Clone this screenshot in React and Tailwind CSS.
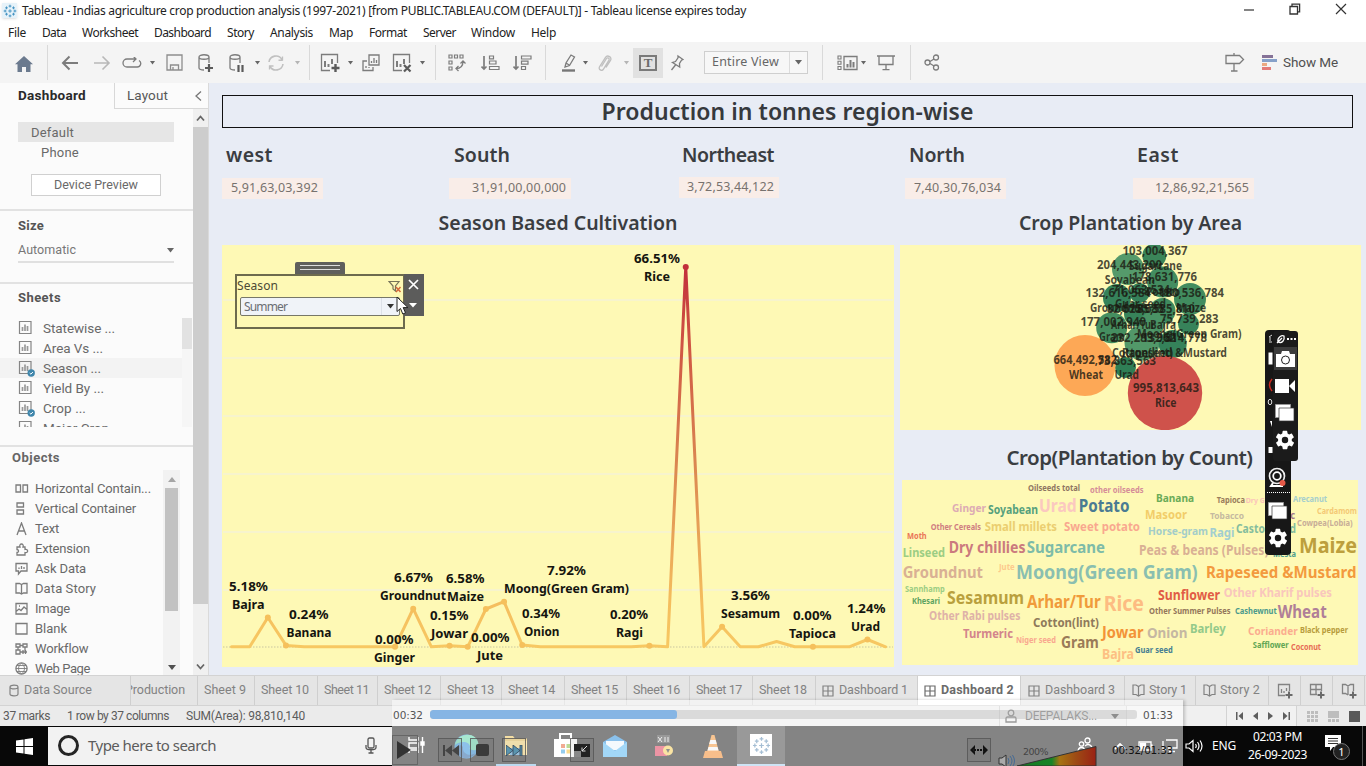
import React, { useLayoutEffect, useRef } from "react";

/* ---------- text helpers ---------- */

// Text whose tracking is adjusted so that it fills a given width.
function Fit({ w, className = "", children }) {
  const ref = useRef(null);
  useLayoutEffect(() => {
    const el = ref.current;
    el.style.letterSpacing = "0px";
    const natural = el.getBoundingClientRect().width;
    el.style.letterSpacing = (w - natural) / el.textContent.length + "px";
  }, [w, children]);
  return (
    <span ref={ref} className={"inline-block shrink-0 whitespace-nowrap " + className}>
      {children}
    </span>
  );
}

const ctx = document.createElement("canvas").getContext("2d");
function sizeFor(text, width, weight) {
  ctx.font = `${weight} 100px "Noto Sans"`;
  return (width / ctx.measureText(text).width) * 100;
}

/* ---------- small icons ---------- */

function Icon({ w = 20, h = 20, vb, className = "", children }) {
  return (
    <svg
      width={w}
      height={h}
      viewBox={vb || `0 0 ${w} ${h}`}
      className={"shrink-0 " + className}
      fill="none"
      stroke="currentColor"
      strokeWidth="1.3"
    >
      {children}
    </svg>
  );
}

function Caret({ light, w = 6 }) {
  return (
    <svg width={w} height={w > 6 ? 5 : 4} viewBox="0 0 6 4" className="shrink-0" preserveAspectRatio="none">
      <path d="M0 0h6L3 3.6z" fill={light ? "#b5b5b5" : "#666"} />
    </svg>
  );
}

function TableauMark({ size, color = "#4e86a8" }) {
  return (
    <svg width={size} height={size} viewBox="0 0 20 20" stroke={color} strokeWidth="1.3" fill="none" className="shrink-0">
      <path d="M10 7.5v5M7.500 10h5M10 1v4M8 3h4M10 15v4M8 17h4M1 10h4M3 8v4M15 10h4M17 8v4M5 3.500v4M3 5.500h4M15 3.500v4M13 5.500h4M5 12.500v4M3 14.500h4M15 12.500v4M13 14.500h4" />
    </svg>
  );
}

function Slot({ className = "", children }) {
  return <div className={"flex h-full shrink-0 items-center justify-center " + className}>{children}</div>;
}
const Sep = () => <div className="h-[35px] w-px bg-[#d9d9d9]" />;

/* ---------- window header ---------- */

function TitleBar() {
  return (
    <div className="flex h-[21px] items-center bg-white pl-[2px]">
      <div className="mr-[5px] flex h-[15px] w-[15px] items-center justify-center bg-[#e6f2f9] shadow">
        <TableauMark size={14} color="#3f8fc0" />
      </div>
      <Fit w={724} className="text-[12px] leading-none text-[#222]">
        Tableau - Indias agriculture crop production analysis (1997-2021) [from PUBLIC.TABLEAU.COM (DEFAULT)] - Tableau license expires today
      </Fit>
      <div className="ml-auto flex h-full items-center pb-[3px] text-[#333]">
        <Icon w={11} h={11} className="mr-[34px]"><path d="M0 6h10" strokeWidth="1.2" /></Icon>
        <Icon w={12} h={12} className="mr-[34px]">
          <path d="M1 3.5h7.5V11H1zM3 3V1.2h7.6v7.6H9" />
        </Icon>
        <Icon w={12} h={12} className="mr-[19px]"><path d="M1 1l10 10M11 1L1 11" strokeWidth="1.2" /></Icon>
      </div>
    </div>
  );
}

const menus = [
  ["File", 18, "ml-[8px]"], ["Data", 24, "ml-[16px]"], ["Worksheet", 56, "ml-[16px]"], ["Dashboard", 57, "ml-[16px]"],
  ["Story", 27, "ml-[16px]"], ["Analysis", 43, "ml-[16px]"], ["Map", 24, "ml-[16px]"], ["Format", 38, "ml-[16px]"],
  ["Server", 33, "ml-[16px]"], ["Window", 44, "ml-[15px]"], ["Help", 25, "ml-[16px]"],
];
function MenuBar() {
  return (
    <div className="flex h-[21px] items-center bg-white pt-[2px]">
      {menus.map(([t, w, m]) => (
        <Fit key={t} w={w} className={"text-[12px] leading-[18px] text-[#222] " + m}>{t}</Fit>
      ))}
    </div>
  );
}

const ChartBox = ({ children }) => (
  <Icon w={22} h={22}>
    <path d="M11 18.5H2.5v-16h16V11" />
    <path d="M6 9v6M9.500 12v3M13 7v5" strokeWidth="2" />
    {children}
  </Icon>
);

function Toolbar() {
  return (
    <div className="flex h-[41px] items-center bg-[#f4f4f4] text-[#7c7c7c]">
      <Slot className="w-[47px] pt-[2px]">
        <svg width="18" height="16" viewBox="0 0 18 16"><path d="M9 0l9 8.200h-2.500V16H11v-5H7v5H2.500V8.200H0z" fill="#6b7a8e" /></svg>
      </Slot>
      <Sep />
      <Slot className="ml-[6px] w-[32px]"><Icon w={18} h={16}><path d="M17 8H2M8.500 1.500L2 8l6.500 6.500" strokeWidth="2" /></Icon></Slot>
      <Slot className="w-[32px] text-[#b8b8b8]"><Icon w={18} h={16}><path d="M1 8h15M9.500 1.500L16 8l-6.500 6.500" strokeWidth="1.6" /></Icon></Slot>
      <Slot className="w-[28px]"><Icon w={20} h={12}><path d="M13 2H5a3.500 3.500 0 000 8h10a3.500 3.500 0 002-6.500M11 -1l3 3-3 3" /></Icon></Slot>
      <Slot className="w-[12px]"><Caret w={5} /></Slot>
      <Slot className="w-8"><Icon w={17} h={17} className="text-[#8d8d8d]"><path d="M1 1h15v15H1zM4.500 16v-5h8v5M7 16v-3" /></Icon></Slot>
      <Slot className="w-8">
        <Icon w={18} h={20}><path d="M7 17c-3 0-5-.8-5-2V4c0-3 10-3 10 0v6M2 4c0 3 10 3 10 0" /><path d="M12 11v8M8 15h8" strokeWidth="2.2" stroke="#5a5a5a" /></Icon>
      </Slot>
      <Slot className="w-[30px]">
        <Icon w={18} h={20}><path d="M7 17c-3 0-5-.8-5-2V4c0-3 10-3 10 0v6M2 4c0 3 10 3 10 0" /><path d="M10.500 12v7M14.500 12v7" strokeWidth="2.2" stroke="#5a5a5a" /></Icon>
      </Slot>
      <Slot className="w-[10px]"><Caret w={5} /></Slot>
      <Slot className="w-[28px] text-[#c0c0c0]"><Icon w={18} h={16}><path d="M2 7a7 7 0 0113-2.500M16 9a7 7 0 01-13 2.500M11.500 5.200h4.200M2.300 11h4.200" strokeWidth="1.6" /><path d="M15.500 1.500v4M2.500 10.500v4" /></Icon></Slot>
      <Slot className="w-[14px]"><Caret w={5} light /></Slot>
      <Slot className="w-[10px]"><Sep /></Slot>
      <Slot className="w-8"><ChartBox><path d="M16.500 12v8M12.500 16h8" strokeWidth="2.4" stroke="#5a5a5a" /></ChartBox></Slot>
      <Slot className="w-2"><Caret w={5} /></Slot>
      <Slot className="w-[34px]">
        <Icon w={18} h={18}><path d="M7 1h10v10H7zM9.500 9V7M12 9V4M14.500 9V6" /><path d="M5 7H1v9.500h10V13M4 14v-2M7 14v-1" /></Icon>
      </Slot>
      <Slot className="w-[28px]"><ChartBox><path d="M13 13l6.500 6.500M19.500 13L13 19.500" strokeWidth="2.2" stroke="#5a5a5a" /></ChartBox></Slot>
      <Slot className="w-[12px]"><Caret w={5} /></Slot>
      <Slot className="w-[14px]"><Sep /></Slot>
      <Slot className="w-[30px]">
        <Icon w={19} h={18}><path d="M1 1h3v3H1zM6.500 1h3v3h-3zM12 1h3v3h-3zM1 7h3v3H1zM1 13h3v3H1z" strokeWidth="1.2" /><path d="M8 14.500c5 0 7-2 7-7M12.500 9.500L15 7l2.500 2.500M10.500 12L8 14.500l2.500 2.500" /></Icon>
      </Slot>
      <Slot className="w-9">
        <Icon w={19} h={16}><path d="M3 1v13M.500 11.500L3 14l2.500-2.500" strokeWidth="1.700" /><path d="M8.500 1h4v2.800h-4zM8.500 6h6.500v3H8.500zM8.500 11.500h9.500v3H8.500z" strokeWidth="1.200" /></Icon>
      </Slot>
      <Slot className="w-[28px]">
        <Icon w={19} h={16}><path d="M3 1v13M.500 11.500L3 14l2.500-2.500" strokeWidth="1.700" /><path d="M8.500 1H18v3H8.500zM8.500 6.200h6.500v3H8.500zM8.500 11.500h4v3h-4z" strokeWidth="1.200" /></Icon>
      </Slot>
      <Slot className="w-[18px]"><Sep /></Slot>
      <Slot className="ml-[2px] w-[26px]">
        <Icon w={16} h={20}><path d="M4 14l1-4 5-8 3.500 2-5 8.500zM5 10l3.500 2.200" /><path d="M1 17.500h13" strokeWidth="2.400" stroke="#777" /></Icon>
      </Slot>
      <Slot className="w-[6px]"><Caret w={5} /></Slot>
      <Slot className="w-[34px] text-[#bfbfbf]">
        <Icon w={16} h={18}><path d="M4.500 12.500l5-8c1-1.500 3.500 0 2.500 1.700l-5.500 9c-1.500 2.500-5.500.2-4-2.300l6-9.500c2-3 7 0 5 3L9 13.500" strokeWidth="1.300" /></Icon>
      </Slot>
      <Slot className="w-2"><Caret w={5} light /></Slot>
      <div className="ml-[3px] flex h-[30px] w-[30px] shrink-0 items-center justify-center bg-[#e1e1e1]">
        <div className="flex h-[16px] w-[18px] items-center justify-center border-2 border-[#7a7a7a] font-[Liberation_Serif,serif] text-[13px] leading-none font-bold text-[#6a6a6a]">T</div>
      </div>
      <Slot className="w-[28px]">
        <Icon w={14} h={17}><path d="M8 2l5 3.500-1.500.7-2 3.300.2 3.500L2.500 8.500l3-1L8 3.800zM5.500 11L1.500 16" strokeWidth="1.300" /></Icon>
      </Slot>
      <div className="ml-[13px] flex h-[23px] w-[104px] shrink-0 items-center border border-[#cfcfcf] bg-[#f7f7f7] text-[#666]">
        <Fit w={67} className="ml-[7px] text-[12.5px] leading-none">Entire View</Fit>
        <div className="ml-auto flex h-full w-[18px] items-center justify-center border-l border-[#dcdcdc]"><Caret w={7} /></div>
      </div>
      <Slot className="w-[29px]"><Sep /></Slot>
      <Slot className="w-[20px]">
        <Icon w={21} h={16}><path d="M1 1h3v3H1zM1 6.200h3v3H1zM1 11.500h3v3H1z" strokeWidth="1.100" /><path d="M7 1.500h13v13H7z" /><path d="M10.500 9v3.500M13.500 5v7.500M16.500 7v5.500" strokeWidth="2" /></Icon>
      </Slot>
      <Slot className="w-[12px]"><Caret w={5} /></Slot>
      <Slot className="w-[34px]"><Icon w={18} h={17}><path d="M0 2h18M2 2v8.500h14V2M9 10.500V16M5.500 15.700h7" /></Icon></Slot>
      <Slot className="w-[14px]"><Sep /></Slot>
      <Slot className="w-[30px]">
        <Icon w={16} h={17}><circle cx="3.500" cy="8.500" r="2.500" /><circle cx="12" cy="3.500" r="2.500" /><circle cx="12" cy="13.500" r="2.500" /><path d="M6 7.500l4-2.500M6 9.500l4 2.500" /></Icon>
      </Slot>
      <div className="ml-auto flex items-center">
        <Icon w={20} h={19} className="mr-[17px]"><path d="M9 0v2.500M1 2.500h13.500l4 4-4 4H1zM9 10.500V18M6 18h6.500" strokeWidth="1.300" /></Icon>
        <div className="mr-[6px] flex w-[15px] flex-col gap-[1px]">
          <div className="h-[3px] w-[11px] bg-[#857297]" />
          <div className="h-[3px] w-[15px] bg-[#86a1c9]" />
          <div className="h-[3px] w-[5px] bg-[#eba981]" />
          <div className="h-[3px] w-[9px] bg-[#e37c79]" />
        </div>
        <Fit w={55} className="mr-[28px] font-[Roboto,sans-serif] text-[13.5px] leading-none text-[#505050]">Show Me</Fit>
      </div>
    </div>
  );
}

/* ---------- sidebar ---------- */

const sheets = [
  ["Statewise ...", 72, false], ["Area Vs ...", 60, false], ["Season ...", 58, true],
  ["Yield By ...", 61, false], ["Crop ...", 43, true], ["Major Crop", 66, false],
];
const objectIcons = {
  h: <path d="M1 3h4.500v7H1zM8 3h4.500v7H8z" />,
  v: <path d="M2 1h6.500v4H2zM2 8h6.500v4H2z" />,
  t: <path d="M2 13L6.500 1 11 13M3.500 9h6" />,
  e: <path d="M2 5h3c-1.500-4 4.500-4 3 0h2v2.500c3.500-1 3.500 4 0 3V13H2v-2.500c2 0 2-3 0-3z" />,
  a: <path d="M1 1.500h11v7.500H6L3.500 12V9H1zM4 7V5.500M6.500 7V4M9 7V5" />,
  d: <path d="M1 1.500h3.500l2 1 2-1H12v9.500H8.500l-2 1-2-1H1zM6.500 2.500V12" />,
  i: <path d="M1 1.500h11v10.500H1zM1 9.500l3-2.500 2 1.500 3-3.500 3 2.500M4 4h1" />,
  b: <path d="M1 1.500h11v10.500H1z" />,
  w: <path d="M1 2h4v3H1zM8 2h4v3H8zM5 3.500h3M10 5v4M1 8h4v4H1zM5 10h7M8 8v4M10.500 8v4M3 5v3" />,
  g: <><circle cx="6.500" cy="6.500" r="5.600" /><path d="M1 6.500h11M2 3.500h9M2 9.500h9M6.500 1c-4 3.500-4 7.500 0 11M6.500 1c4 3.500 4 7.500 0 11" strokeWidth=".9" /></>,
};
const objects = [
  ["h", "Horizontal Contain...", 116], ["v", "Vertical Container", 101], ["t", "Text", 24], ["e", "Extension", 55],
  ["a", "Ask Data", 51], ["d", "Data Story", 61], ["i", "Image", 35], ["b", "Blank", 32], ["w", "Workflow", 53], ["g", "Web Page", 55],
];

function Sidebar() {
  return (
    <aside className="flex h-full w-[209px] shrink-0 flex-col border-r border-[#dadada] bg-[#fbfbfb] font-[Roboto,sans-serif] text-[13px] text-[#696969]">
      <div className="flex h-[26px] shrink-0 items-center">
        <div className="w-[114px] pl-[18px]"><Fit w={68} className="text-[13.5px] leading-none font-bold text-[#2a2a2a]">Dashboard</Fit></div>
        <div className="flex h-full flex-1 items-center border-b border-l border-[#d8d8d8] pl-[12px]">
          <Fit w={41} className="text-[13.5px] text-[#585858]">Layout</Fit>
          <Icon w={8} h={12} className="ml-auto mr-[6px] text-[#777]"><path d="M7 1.500L2 6l5 4.500" /></Icon>
        </div>
      </div>
      <div className="flex min-h-0 flex-1">
        <div className="flex w-[193px] flex-col">
          <div className="flex h-[102px] shrink-0 flex-col border-b-2 border-[#e2e2e2] pt-[13px]">
            <div className="ml-[18px] flex h-[20px] w-[156px] items-center bg-[#e6e6e6] pt-px pl-[13px]"><Fit w={43}>Default</Fit></div>
            <div className="flex h-[20px] items-center pt-px pl-[41px]"><Fit w={38}>Phone</Fit></div>
            <div className="mt-[12px] ml-[31px] flex h-[22px] w-[130px] items-center justify-center border border-[#d0d0d0] bg-white"><Fit w={84} className="text-[12.5px]">Device Preview</Fit></div>
          </div>
          <div className="flex h-[73px] shrink-0 flex-col border-b-2 border-[#e2e2e2] pt-[6px]">
            <div className="flex h-[18px] items-center pl-[18px]"><Fit w={26} className="font-bold text-[#555]">Size</Fit></div>
            <div className="mt-[4px] ml-[18px] flex h-[24px] w-[156px] items-center justify-between border-b-2 border-[#e0e0e0]"><Fit w={58} className="text-[12.5px] text-[#777]">Automatic</Fit><Caret w={7} /></div>
          </div>
          <div className="flex h-[163px] shrink-0 flex-col border-b-2 border-[#e2e2e2] pt-[5px]">
            <div className="flex h-[18px] shrink-0 items-center pl-[18px]"><Fit w={43} className="font-bold text-[#555]">Sheets</Fit></div>
            <div className="mt-[11px] flex h-[109px] overflow-hidden">
              <div className="w-[182px]">
                {sheets.map(([t, w, used]) => (
                  <div key={t} className={"flex h-[20px] items-center pl-[18px] " + (t.startsWith("Season") ? "bg-[#f3f3f3]" : "")}>
                    <svg width="17" height="17" viewBox="0 0 17 17" className="mr-[8px] shrink-0">
                      <path d="M1.500 1.500h11.500v12H1.500z" fill="none" stroke="#858585" strokeWidth="1.200" />
                      <path d="M4.500 7v4M7 4.500V11M9.500 6v5" stroke="#999" strokeWidth="1.700" />
                      {used && <><circle cx="13.200" cy="13" r="3.700" fill="#3f86ab" /><path d="M11.700 13l1.200 1.200 2-2.200" fill="none" stroke="#fff" /></>}
                    </svg>
                    <Fit w={w} className="text-[13.5px]">{t}</Fit>
                  </div>
                ))}
              </div>
              <div className="h-full w-[10px] bg-[#f6f6f6]"><div className="h-[31px] bg-[#e2e2e2]" /></div>
            </div>
          </div>
          <div className="flex min-h-0 flex-1 flex-col overflow-hidden pt-[2px]">
            <div className="flex h-[18px] shrink-0 items-center pl-[12px]"><Fit w={48} className="font-bold text-[#666]">Objects</Fit></div>
            <div className="mt-[3px] flex min-h-0 flex-1">
              <div className="w-[163px] pt-[9px]">
                {objects.map(([k, t, w]) => (
                  <div key={t} className="flex h-[20px] items-center pl-[15px] text-[#7c7c7c]">
                    <Icon w={14} h={14} className="mr-[6px]">{objectIcons[k]}</Icon>
                    <Fit w={w} className="text-[13px] text-[#696969]">{t}</Fit>
                  </div>
                ))}
              </div>
              <div className="flex h-full w-[17px] flex-col items-center bg-[#f2f2f2] pt-[7px] pb-[5px]">
                <svg width="8" height="5"><path d="M0 5h8L4 0z" fill="#a5a5a5" /></svg>
                <div className="mt-[6px] h-[123px] w-[13px] bg-[#c2c2c2]" />
                <svg width="8" height="5" className="mt-auto"><path d="M0 0h8L4 5z" fill="#505050" /></svg>
              </div>
            </div>
          </div>
        </div>
        <div className="flex w-[15px] flex-col items-center bg-[#f0f0f0]">
          <div className="flex h-[18px] items-center"><Icon w={9} h={7} className="text-[#666]"><path d="M1 5.500L4.500 1.500 8 5.500" strokeWidth="1.800" /></Icon></div>
          <div className="h-[477px] w-full bg-[#cdcdcd]" />
          <Icon w={9} h={7} className="mt-auto mb-[5px] text-[#666]"><path d="M1 1.500l3.500 4 3.500-4" strokeWidth="1.800" /></Icon>
        </div>
      </div>
    </aside>
  );
}

/* ---------- dashboard ---------- */

const base = 646.8;
const peaks = {
  2: 617.5, 3: 645.4, 10: 608.7, 12: 645.8, 14: 609, 15: 601.7, 16: 645, 23: 645.8, 25: 267, 27: 626.8, 30: 641.5, 35: 639.5,
};
const pts = Array.from({ length: 37 }, (_, i) => [231.5 + 18.17 * i, peaks[i] ?? base]);
const dots = [2, 3, 9, 10, 12, 13, 14, 15, 16, 23, 25, 27, 32, 35];
const lineLabels = [
  ["66.51%", 634, 680, 263], ["Rice", 644, 670, 280.5], ["5.18%", 229, 268, 591], ["Bajra", 232, 264.5, 609],
  ["0.24%", 289, 328.5, 619], ["Banana", 286.5, 331.5, 637], ["0.00%", 375, 413.5, 644], ["Ginger", 374, 415, 662],
  ["6.67%", 394, 433, 582], ["Groundnut", 380, 446, 600], ["6.58%", 446, 484.5, 583], ["Maize", 447, 484, 601],
  ["0.15%", 430, 468.5, 620], ["Jowar", 431, 468, 638], ["0.00%", 471, 509.5, 642], ["Jute", 477, 503, 660],
  ["7.92%", 547, 586, 575], ["Moong(Green Gram)", 504, 629, 593], ["0.34%", 522, 560, 618], ["Onion", 524, 559.5, 636],
  ["0.20%", 610, 648, 619], ["Ragi", 616, 643, 636.5], ["3.56%", 731, 770, 600], ["Sesamum", 721, 780, 618],
  ["0.00%", 793, 831.5, 620], ["Tapioca", 789, 836, 638], ["1.24%", 847, 885.5, 613], ["Urad", 851, 880, 631],
];

function LineChart() {
  return (
    <svg width="672" height="422" viewBox="222 245 672 422" className="block bg-[#fef9b5]">
      <defs>
        <linearGradient id="heat" gradientUnits="userSpaceOnUse" x1="0" y1="647" x2="0" y2="267">
          <stop offset="0" stopColor="#f7c862" />
          <stop offset=".12" stopColor="#f4bd5e" />
          <stop offset=".5" stopColor="#d98450" />
          <stop offset=".8" stopColor="#cf5543" />
          <stop offset="1" stopColor="#c2303b" />
        </linearGradient>
      </defs>
      {[300, 358, 416, 474, 532, 590].map((y) => <path key={y} d={`M223 ${y}H893`} stroke="#f7f4cd" strokeWidth="2" />)}
      <path d="M223 647H893" stroke="#c9c6a0" strokeDasharray="1.500 1.500" />
      <polyline points={pts.map((p) => p.join(",")).join(" ")} fill="none" stroke="url(#heat)" strokeWidth="3" strokeLinejoin="round" strokeLinecap="round" />
      {dots.map((i) => <circle key={i} cx={pts[i][0]} cy={pts[i][1]} r="3" fill={i === 25 ? "#c2303b" : "#f5c05c"} />)}
      {lineLabels.map(([t, a, b, y], i) => (
        <text key={i} x={a} y={y} textLength={b - a} fontSize="12.5" fontWeight="700" fill="#15150f" lengthAdjust="spacingAndGlyphs">{t}</text>
      ))}
    </svg>
  );
}

const bubbles = [
  [1154.3, 255.7, 12, "#3b8559"], [1128, 269, 16, "#559a6b"], [1162.7, 282, 15.5, "#438d60"], [1139.5, 293, 10, "#35805a"],
  [1117, 298, 14, "#35825a"], [1190, 299, 16, "#418c5f"], [1136.5, 314, 12.5, "#37835a"], [1162.5, 311, 13, "#3f8a5e"],
  [1111.7, 327.7, 15.5, "#458e60"], [1188.5, 324, 10.5, "#37835a"], [1153, 323, 12, "#4a9365"], [1142, 343, 17.5, "#529869"],
  [1172.7, 344, 14, "#35825a"], [1125.5, 367.5, 10.5, "#2f7e55"], [1085, 365.5, 30.5, "#fda856"], [1165, 393, 37.2, "#cf524b"],
];
const bubbleLabels = [
  ["103,004,367", 1122.5, 1187.5, 255], ["Sugarcane", 1129, 1182, 269.5], ["204,443,200", 1097, 1162, 268.5], ["Soyabean", 1104.7, 1155, 283.5],
  ["178,631,776", 1132, 1197, 280.5], ["Potato", 1146, 1180, 295.5], ["71,063,534", 1112, 1170, 293.5], ["Guar seed", 1115, 1166, 308],
  ["132,616,584", 1085.5, 1151, 296.7], ["Groundnut", 1090, 1145, 312], ["180,536,784", 1159, 1224, 296.7], ["Maize", 1176, 1206, 311.5],
  ["82,625,685", 1107, 1164, 313], ["85,585,810", 1137, 1195, 313], ["Arhar/Tur", 1111, 1155, 328.5], ["Bajra", 1150, 1176, 328.5],
  ["75,739,283", 1160, 1218.5, 322.5], ["Moong(Green Gram)", 1137, 1241.5, 338], ["177,002,940", 1080.5, 1146, 325.5], ["Gram", 1099, 1125, 340.5],
  ["232,283,962", 1111, 1176, 341.5], ["132,814,778", 1142, 1207, 341.5], ["Cotton(lint)", 1112, 1173, 356.5], ["Rapeseed &Mustard", 1122, 1227, 356.5],
  ["664,492,582", 1053.5, 1117, 363.5], ["73,863,563", 1097.5, 1156, 364.5], ["Urad", 1114.5, 1139, 379], ["Wheat", 1069, 1103, 378.5],
  ["995,813,643", 1133, 1199, 391.5], ["Rice", 1155, 1176.5, 406.5],
];

function BubbleChart() {
  return (
    <svg width="461" height="185" viewBox="900 245 461 185" className="block bg-[#fef9b5]">
      {bubbles.map(([x, y, r, c], i) => <circle key={i} cx={x} cy={y} r={r} fill={c} />)}
      {bubbleLabels.map(([t, a, b, y], i) => (
        <text key={i} x={a} y={y} textLength={b - a} fontSize="11.5" fontWeight="700" fill="#1b1a12" fillOpacity=".8" lengthAdjust="spacingAndGlyphs">{t}</text>
      ))}
    </svg>
  );
}

const words = [
  ["Oilseeds total", 1028, 1080, 490.5, "#8e7562"], ["other oilseeds", 1090, 1143.5, 493, "#d58d98"],
  ["Ginger", 952, 986, 511.5, "#dcabb4"], ["Soyabean", 988, 1038, 514, "#56a07d"], ["Urad", 1039, 1076.7, 512, "#fbc8c0"],
  ["Potato", 1078.7, 1129.5, 512, "#4a7b93"], ["Banana", 1156, 1194, 502, "#6aab58"], ["Tapioca", 1216.7, 1245, 502.7, "#9a7d5c"],
  ["Dry Ginger", 1245.7, 1283, 503, "#fbc3bb"], ["Arecanut", 1293, 1327, 502, "#a6cfcd"], ["Cardamom", 1317, 1357, 514, "#f4c975"],
  ["Masoor", 1145, 1187, 519, "#f2cd69"], ["Tobacco", 1210, 1244, 518.5, "#c5b9a0"], ["Garlic", 1268, 1295, 518.5, "#a4798c"],
  ["Cowpea(Lobia)", 1297, 1352.7, 526, "#c8ae98"], ["Other Cereals", 930.7, 981, 530, "#cf7d81"], ["Small millets", 984.7, 1057, 531, "#ebce70"],
  ["Sweet potato", 1064, 1140, 531, "#f9a88f"], ["Horse-gram", 1148, 1208, 535, "#a3cdc9"], ["Ragi", 1209.5, 1234.5, 536.5, "#a2ced0"],
  ["Castor seed", 1236, 1296, 533, "#85bd9d"], ["Moth", 907, 926.7, 539, "#ea7556"], ["Linseed", 902.7, 945, 557, "#9ccd83"],
  ["Dry chillies", 948.7, 1025.5, 552.5, "#cb7a7e"], ["Sugarcane", 1026.7, 1105, 553, "#7dbba8"], ["Peas & beans (Pulses)", 1139, 1268.5, 555, "#d9b094"],
  ["Mesta", 1273, 1296, 556.5, "#4f9d8d"], ["Maize", 1299, 1357, 552.7, "#bd9f3d"], ["Groundnut", 902.7, 983, 577.7, "#d9b094"],
  ["Jute", 999, 1014.7, 570, "#fdc98c"], ["Moong(Green Gram)", 1016, 1197.7, 579, "#8abfb0"], ["Rapeseed &Mustard", 1206, 1356.5, 578, "#f39a3e"],
  ["Sannhamp", 905, 944.7, 592, "#9ccd83"], ["Khesari", 912, 940, 604, "#5da360"], ["Sesamum", 947, 1024, 604, "#b9a03d"],
  ["Arhar/Tur", 1027, 1100.7, 608, "#f09b3b"], ["Rice", 1103.7, 1144, 610.7, "#fdbc82"], ["Sunflower", 1158, 1220, 599.7, "#e15c45"],
  ["Other Kharif pulses", 1223.7, 1332, 597, "#f9c6bd"], ["Other Rabi pulses", 929, 1020.5, 620, "#dfb2a8"], ["Other Summer Pulses", 1149, 1230.5, 614, "#94775b"],
  ["Cashewnut", 1235, 1276.7, 614, "#4c9a8c"], ["Wheat", 1277.7, 1326.7, 618, "#b07f98"], ["Turmeric", 963, 1013, 638, "#d3848c"],
  ["Cotton(lint)", 1033, 1099, 627, "#8f7a5b"], ["Niger seed", 1016, 1056, 643, "#f9a88f"], ["Gram", 1061, 1098.7, 648, "#9a7b58"],
  ["Jowar", 1102, 1143.5, 638, "#f39338"], ["Onion", 1147, 1187.5, 638, "#c5b7a2"], ["Barley", 1190, 1225.7, 632.7, "#93c98a"],
  ["Bajra", 1102, 1134, 659, "#fdc083"], ["Guar seed", 1135, 1172.7, 652.7, "#477f92"], ["Coriander", 1248, 1297.7, 635, "#fbad8f"],
  ["Black pepper", 1300, 1348, 633, "#b89c3c"], ["Safflower", 1252.7, 1288.7, 648, "#62a653"], ["Coconut", 1291, 1321, 650, "#e76c56"],
];

function WordCloud() {
  return (
    <svg width="456" height="185" viewBox="902 480 456 185" className="block bg-[#fef9b5]">
      {words.map(([t, a, b, y, c]) => (
        <text key={t} x={a} y={y} textLength={b - a} fontSize={sizeFor(t, b - a, 700) * 1.12} fontWeight="700" fill={c} lengthAdjust="spacingAndGlyphs">{t}</text>
      ))}
    </svg>
  );
}

function SeasonFilter() {
  return (
    <div className="absolute top-[179px] left-[26px] flex">
      <div className="flex flex-col">
        <div className="ml-[60px] flex h-[12px] w-[50px] flex-col items-center gap-[3px] rounded-t-[2px] bg-[#5f5f5c] pt-[3px]">
          <div className="h-px w-[40px] bg-[#dcdcdc]" />
          <div className="h-px w-[40px] bg-[#dcdcdc]" />
        </div>
        <div className="h-[55px] w-[170px] border-2 border-[#6d6b4e] bg-[#fef9b5]">
          <div className="flex h-[20px] items-center justify-between pr-[1px]">
            <Fit w={41} className="text-[12px] leading-none text-[#4c4a35]">Season</Fit>
            <svg width="14" height="13" viewBox="0 0 14 13" fill="none"><path d="M1 1.500h10L7.500 6v5L5 9V6z" stroke="#77745a" strokeWidth="1.200" /><path d="M8 7l4.500 5M12.500 7L8 12" stroke="#d4683c" strokeWidth="1.500" /></svg>
          </div>
          <div className="mt-px ml-[3px] flex h-[19px] w-[160px] items-center rounded-[2px] border border-[#777768] bg-[#f0f3f8]">
            <Fit w={43} className="ml-[3px] text-[12px] leading-none text-[#6b6e73]">Summer</Fit>
            <div className="ml-auto flex h-full w-[18px] items-center justify-center border-l border-[#dde1e8]"><svg width="7" height="5"><path d="M0 0h7L3.500 4.500z" fill="#333" /></svg></div>
          </div>
        </div>
      </div>
      <div className="mt-[12px] -ml-px flex h-[42px] w-[20px] flex-col items-center bg-[#5c5c5b] pt-[5px] pr-[2px]">
        <Icon w={11} h={11} className="text-white"><path d="M1 1l9 9M10 1L1 10" strokeWidth="1.700" /></Icon>
        <svg width="8" height="5" className="mt-[13px]"><path d="M0 0h8L4 4.500z" fill="#fff" /></svg>
      </div>
      <svg width="13" height="19" viewBox="0 0 13 19" className="absolute top-[34px] left-[161px]">
        <path d="M1 1v14.500l3.500-3 2.300 5.500 2.700-1.200-2.300-5.200H12z" fill="#fff" stroke="#222" />
      </svg>
    </div>
  );
}

const regions = [
  ["west", 47, "5,91,63,03,392", 87, "w-[101px]", "w-[227px]", "pl-[4px]"],
  ["South", 56, "31,91,00,00,000", 94, "w-[122px]", "w-[230px]", "pl-[5px]"],
  ["Northeast", 92, "3,72,53,44,122", 87, "w-[100px] -mt-px", "w-[226px]", "pl-[3px]"],
  ["North", 56, "7,40,30,76,034", 87, "w-[101px]", "w-[228px]", "pl-[4px]"],
  ["East", 42, "12,86,92,21,565", 94, "w-[121px]", "w-[221px]", "pl-[4px]"],
];

function Dashboard() {
  return (
    <main className="relative flex min-w-0 flex-1 flex-col bg-[#e8ecf5] pt-[12px] pl-[13px] text-[#3a3d41]">
      <div className="flex h-[33px] w-[1131px] shrink-0 items-center justify-center border border-[#111] pb-px font-semibold">
        <Fit w={372} className="text-[23px] leading-none text-[#36393d]">Production in tonnes region-wise</Fit>
      </div>
      <div className="flex h-[82px] shrink-0">
        {regions.map(([n, w, v, vw, bw, cw, pl]) => (
          <div key={n} className={"flex shrink-0 flex-col pt-[16px] " + cw}>
            <div className={"flex h-[22px] items-center " + pl}><Fit w={w} className="text-[19.5px] leading-none font-semibold">{n}</Fit></div>
            <div className={"flex h-[21px] items-center justify-end bg-[#f9ede8] pr-[5px] " + (n === "Northeast" ? "mt-[11px] " : "mt-[12px] ") + bw.replace(" -mt-px", "")}>
              <Fit w={vw} className="text-[12.5px] leading-none text-[#77726e]">{v}</Fit>
            </div>
          </div>
        ))}
      </div>
      <div className="flex">
        <section className="relative w-[672px] shrink-0">
          <h2 className="flex h-[35px] items-center justify-center pb-[9px]"><Fit w={239} className="text-[19.5px] leading-none font-semibold">Season Based Cultivation</Fit></h2>
          <LineChart />
        </section>
        <section className="ml-[6px] flex shrink-0 flex-col">
          <h2 className="flex h-[35px] items-center justify-center pb-[10px]"><Fit w={223} className="text-[19.5px] leading-none font-semibold">Crop Plantation by Area</Fit></h2>
          <BubbleChart />
          <h2 className="flex h-[50px] items-center justify-center pt-[4px] pr-[2px]"><Fit w={246} className="text-[20.5px] leading-none font-semibold">Crop(Plantation by Count)</Fit></h2>
          <div className="pl-[2px]"><WordCloud /></div>
        </section>
      </div>
      <SeasonFilter />
    </main>
  );
}

/* ---------- sheet tabs and status ---------- */

const GridIcon = () => <Icon w={12} h={12} className="mr-[5px]"><path d="M1 1h10v10H1zM6 1v10M1 6h10" strokeWidth="1.200" /></Icon>;
const BookIcon = () => <Icon w={13} h={13} className="mr-[4px]"><path d="M1 1h3l2.500 1.500L9 1h3v9.500H9L6.500 12 4 10.500H1zM6.500 2.500V12" strokeWidth="1.200" /></Icon>;
const sheetTabs = [
  ["Sheet 9", 42, "w-[57px]"], ["Sheet 10", 48, "w-[63px]"], ["Sheet 11", 45, "w-[60px]"], ["Sheet 12", 47, "w-[63px]"],
  ["Sheet 13", 47, "w-[61px]"], ["Sheet 14", 47, "w-[63px]"], ["Sheet 15", 47, "w-[62px]"], ["Sheet 16", 47, "w-[63px]"],
  ["Sheet 17", 46, "w-[63px]"], ["Sheet 18", 48, "w-[63px]"],
];
function SheetTabs() {
  const cell = "flex h-full shrink-0 items-center border-r border-[#cfcfcf] ";
  return (
    <div className="flex h-[31px] shrink-0 items-center border-t border-b border-[#d3d3d3] bg-[#e5e5e5] font-[Roboto,sans-serif] text-[12.5px] text-[#828282]">
      <div className={cell + "w-[131px] pb-px pl-[9px]"}>
        <Icon w={10} h={13} className="mr-[5px]"><path d="M1 3c0-2.500 8-2.500 8 0v7c0 2.500-8 2.500-8 0zM1 3c0 2.500 8 2.500 8 0" strokeWidth="1.200" /></Icon>
        <Fit w={68}>Data Source</Fit>
      </div>
      <div className={cell + "w-[67px] justify-end overflow-hidden pr-[12px]"}><Fit w={60}>Production</Fit></div>
      {sheetTabs.map(([t, w, c]) => <div key={t} className={cell + "pl-[6px] " + c}><Fit w={w}>{t}</Fit></div>)}
      <div className={cell + "w-[102px] pl-[6px]"}><GridIcon /><Fit w={69}>Dashboard 1</Fit></div>
      <div className={cell + "w-[103px] bg-white pl-[6px] font-bold text-[#6b6b6b]"}><GridIcon /><Fit w={73}>Dashboard 2</Fit></div>
      <div className={cell + "w-[104px] pl-[7px]"}><GridIcon /><Fit w={70}>Dashboard 3</Fit></div>
      <div className={cell + "w-[71px] pl-[7px]"}><BookIcon /><Fit w={38}>Story 1</Fit></div>
      <div className={cell + "w-[73px] pl-[7px]"}><BookIcon /><Fit w={40}>Story 2</Fit></div>
      <div className={cell + "w-[32px] justify-center"}><Icon w={16} h={16}><path d="M8 12.500H1.500V1.500h11V8M4.500 6v4M7 8v2M9.500 5v3" /><path d="M12 8.500v7M8.500 12h7" strokeWidth="2" stroke="#6a6a6a" /></Icon></div>
      <div className={cell + "w-[32px] justify-center"}><Icon w={16} h={16}><path d="M8 11.500H1.500v-10h11V8M7 1.500v10M1.500 6.500h11" /><path d="M12 8.500v7M8.500 12h7" strokeWidth="2" stroke="#6a6a6a" /></Icon></div>
      <div className={cell + "w-[32px] justify-center"}><Icon w={16} h={16}><path d="M7 12l-2.500-1.500H1.500v-9h3L7 3l2.500-1.500h3V8M7 3v9" /><path d="M12 8.500v7M8.500 12h7" strokeWidth="2" stroke="#6a6a6a" /></Icon></div>
    </div>
  );
}

function StatusBar() {
  return (
    <div className="flex h-[20px] shrink-0 items-center bg-[#ebebeb] font-[Roboto,sans-serif] text-[12px] leading-none text-[#5c5c5c]">
      <Fit w={47} className="ml-[3px]">37 marks</Fit>
      <Fit w={102} className="ml-[17px]">1 row by 37 columns</Fit>
      <Fit w={119} className="ml-[17px]">SUM(Area): 98,810,140</Fit>
      <div className="ml-auto flex h-full items-center">
        <div className="flex h-full w-[127px] items-center border-l border-[#c4c4c4] pl-[5px] text-[#333]">
          <Icon w={12} h={14} className="mr-[8px]"><circle cx="6" cy="4" r="2.800" /><path d="M1 13V9.500q0-1.500 1.500-1.500h7q1.500 0 1.500 1.500V13z" /></Icon>
          <Fit w={72}>DEEPALAKS...</Fit>
          <svg width="8" height="5" className="ml-[14px]"><path d="M0 0h8L4 5z" fill="#000" /></svg>
        </div>
        <div className="flex h-full w-[100px] border-l border-[#d0d0d0] bg-[#f0f0f0]" />
        <div className="flex h-full w-[71px] items-center justify-between border-x border-[#d3d3d3] bg-[#f1f1f1] pr-[6px] pl-[9px]">
          <svg width="7" height="8"><path d="M0 0h1.500v8H0zM7 0v8L2.500 4z" fill="#5e5e5e" /></svg>
          <svg width="5" height="8"><path d="M5 0v8L0 4z" fill="#5e5e5e" /></svg>
          <svg width="5" height="8"><path d="M0 0v8l5-4z" fill="#5e5e5e" /></svg>
          <svg width="7" height="8"><path d="M5.500 0H7v8H5.500zM0 0v8l4.500-4z" fill="#5e5e5e" /></svg>
        </div>
        <div className="flex w-[69px] items-center gap-[10px] pl-[10px]">
          <svg width="11" height="11"><path d="M0 1.500h11M0 5.500h11M0 9.500h11" stroke="#bdbdbd" strokeWidth="3" strokeDasharray="3 1" /></svg>
          <svg width="11" height="11"><path d="M0 0h11v7H0z" fill="#bdbdbd" /><path d="M0 9.500h11" stroke="#bdbdbd" strokeWidth="3" strokeDasharray="3 1" /></svg>
          <div className="h-[11px] w-[11px] bg-[#5a5a5a]" />
        </div>
      </div>
    </div>
  );
}

/* ---------- windows taskbar ---------- */

function Taskbar() {
  return (
    <div className="flex h-[40px] shrink-0 items-center bg-[#080808] text-white">
      <div className="flex w-[48px] justify-center">
        <svg width="17" height="17" viewBox="0 0 17 17"><path d="M0 2.500l7.500-1V8H0zM8.500 1.300L17 0v8H8.500zM0 9h7.500v6.500l-7.500-1zM8.500 9H17v8l-8.500-1.300z" fill="#fff" /></svg>
      </div>
      <div className="mb-px flex h-[38px] w-[344px] items-center bg-[#f2f2f2]">
        <div className="ml-[10px] h-[21px] w-[21px] rounded-full border-[3px] border-[#252525]" />
        <Fit w={128} className="ml-[9px] text-[15px] leading-none text-[#5c5c5c]">Type here to search</Fit>
        <Icon w={12} h={17} className="mr-[15px] ml-auto text-[#555]"><rect x="3" y="1" width="6" height="10" rx="1.500" /><path d="M1 8v2.500c0 3 10 3 10 0V8M6 13v3M3.500 16h5" /></Icon>
      </div>
      <div className="flex w-[48px] justify-center pr-px pb-[3px]">
        <svg width="18" height="16" viewBox="0 0 18 16" fill="none" stroke="#fff" strokeWidth="1.400"><path d="M2 0v3h9V0M2 6h9v5H2zM2 16v-3h9v3M15.500 0v16" /><path d="M14 5h3v3h-3z" fill="#fff" /></svg>
      </div>
      <div className="flex w-[52px] justify-center">
        <svg width="25" height="25" viewBox="0 0 25 25">
          <circle cx="12.500" cy="12.500" r="12" fill="#1a83d2" />
          <path d="M1 11C3-2 24-3 24.500 11c0 6-6 6-9 4 3-6-7-10-14.500-4z" fill="#4fd0a0" />
          <path d="M9 13c-1 7 7 10 13 6-6 8-19 6-20-3 0-5 5-6 7-3z" fill="#12549b" />
        </svg>
      </div>
      <div className="flex h-full w-[48px] items-center justify-center">
        <div className="flex h-full w-[40px] items-center justify-center border-b-2 border-[#78b4e0]">
          <svg width="22" height="19" viewBox="0 0 22 19"><path d="M0 0h8l2 2.500h12V19H0z" fill="#e8bc48" /><path d="M0 5h22v14H0z" fill="#f8d56c" /><path d="M5 12h12v7H5z" fill="#3e94cf" /></svg>
        </div>
      </div>
      <div className="flex w-[50px] justify-center pb-[2px]">
        <svg width="23" height="24" viewBox="0 0 23 24"><path d="M0 6h23v18H0z" fill="#fff" /><path d="M6 6V1h11v5" fill="none" stroke="#fff" strokeWidth="2" /><path d="M7 11h4v4H7z" fill="#e35728" /><path d="M12.500 11h4v4h-4z" fill="#79b52b" /><path d="M7 16.500h4v4H7z" fill="#2b98dc" /><path d="M12.500 16.500h4v4h-4z" fill="#f5b719" /></svg>
      </div>
      <div className="flex w-[50px] justify-center">
        <svg width="24" height="22" viewBox="0 0 24 22"><path d="M0 7l12-7 12 7v15H0z" fill="#1583d8" /><path d="M3 6h18v9H3z" fill="#e8f2fa" /><path d="M0 7l12 9 12-9v15H0z" fill="#45aeee" /></svg>
      </div>
      <div className="flex w-[48px] justify-center">
        <svg width="18" height="22" viewBox="0 0 18 22"><path d="M2 0h13v8H2z" fill="#333" /><path d="M3 2l4 5M7 2L3 7M10 2v5M13 2v5" stroke="#ddd" /><path d="M0 11h12v10H0z" fill="#d82848" /><circle cx="13" cy="15.500" r="5" fill="#f4c947" /><path d="M11 14h4l-2 4z" fill="#222" /></svg>
      </div>
      <div className="flex w-[49px] justify-center">
        <svg width="20" height="23" viewBox="0 0 20 23"><path d="M8.500 0h3L16 17H4z" fill="#f08a24" /><path d="M7.300 5h5.400l1 4H6.200zM5.500 12h9l1 3.500h-11z" fill="#f3f3f3" /><path d="M2 16h16l2 7H0z" fill="#ee7c17" /></svg>
      </div>
      <div className="flex h-full w-[48px] items-center justify-center border-b-2 border-[#9cc8ea] bg-[#333]">
        <div className="flex h-[22px] w-[22px] items-center justify-center bg-white"><TableauMark size={19} color="#4a7da8" /></div>
      </div>
      <div className="ml-auto flex h-full items-center">
        <Icon w={16} h={16} className="mr-[21px] mb-[2px]"><circle cx="10.500" cy="3.500" r="2.500" /><circle cx="4.500" cy="7" r="2.200" /><path d="M1 15c0-6 7-6 7 0M8 9c3-3 7-1 7 3" /></Icon>
        <Icon w={12} h={7} className="mr-[12px]"><path d="M1 6l5-5 5 5" strokeWidth="1.800" /></Icon>
        <Icon w={15} h={10} className="mr-[9px]"><path d="M1 1h12v8H1zM14 3.500v3" /><path d="M2.500 2.500h5v5h-5z" fill="#fff" /></Icon>
        <Icon w={16} h={14} className="mr-[7px]"><path d="M4 1h11v8H6M1 2v9h3M7 12.500h6" /></Icon>
        <Icon w={18} h={14} className="mr-[9px]"><path d="M1 5h3l4-3.500v11L4 9H1zM10.500 5q1.500 2 0 4M12.500 3q3 4 0 8M15 1.500q4 5.500 0 11" strokeWidth="1.200" /></Icon>
        <Fit w={24} className="mr-[12px] text-[12px] leading-none">ENG</Fit>
        <div className="mr-[18px] flex w-[59px] flex-col items-center text-[12px] leading-[18px]">
          <Fit w={49}>02:03 PM</Fit>
          <Fit w={59}>26-09-2023</Fit>
        </div>
        <div className="relative mr-[20px] h-[24px] w-[17px]">
          <svg width="16" height="17" viewBox="0 0 16 17" className="mt-[1px]"><path d="M0 0h16v12H8l-3 4v-4H0z" fill="#fff" /><path d="M3 3.500h10M3 6h10M3 8.500h10" stroke="#333" /></svg>
          <span className="absolute top-[9px] left-[8px] flex h-[17px] w-[17px] items-center justify-center rounded-full border border-[#777] bg-[#222] text-[11px] leading-none">1</span>
        </div>
        <div className="mr-[3px] h-full w-px bg-[#555]" />
      </div>
    </div>
  );
}

/* ---------- video player controls floating over the screen ---------- */

const pbtn = "absolute flex h-[24px] w-[24px] items-center justify-center border border-[#555]/80 bg-black/5 ";
function PlayerOverlay() {
  return (
    <div className="absolute top-[700px] left-[392px] h-[66px] w-[791px] bg-white/50 shadow-[2px_0_3px_rgba(0,0,0,0.2)]">
      <div className="flex h-[26px] items-center pt-[4px] font-[DejaVu_Sans,sans-serif] text-[10.5px] leading-none text-[#555]">
        <Fit w={30} className="ml-px">00:32</Fit>
        <div className="mt-[-2px] ml-[7px] flex h-[9px] w-[707px] overflow-hidden rounded-[3px] bg-[#aaa]/35">
          <div className="h-full w-[247px] rounded-[3px] bg-[#86b5e4]" />
        </div>
        <Fit w={30} className="ml-[6px]">01:33</Fit>
      </div>
      <div className="absolute top-[35px] left-0 flex h-[30px] w-[26px] items-center border border-[#666] pl-[4px]">
        <svg width="14" height="18"><path d="M0 0l14 9-14 9z" fill="#333" /></svg>
      </div>
      <div className={pbtn + "top-[38px] left-[46px]"}><svg width="17" height="11"><path d="M1 0h2v11H1zM10 0v11L3 5.500zM17 0v11l-7-5.500z" fill="#444" /></svg></div>
      <div className={pbtn + "top-[38px] left-[78px]"}><div className="h-[12px] w-[13px] rounded-[2px] bg-[#3a3a3a]" /></div>
      <div className={pbtn + "top-[38px] left-[110px]"}><svg width="17" height="11"><path d="M14 0h2v11h-2zM7 0v11l7-5.500zM0 0v11l7-5.500z" fill="#5a94ae" stroke="#345" strokeWidth=".8" /></svg></div>
      <div className={pbtn + "top-[38px] left-[178px]"}><div className="flex h-[13px] w-[16px] items-end bg-[#222]"><div className="h-[6px] w-[7px] bg-[#888]" /><svg width="7" height="8" className="mb-[4px]"><path d="M6 1L1 6M1 2.500V6h3.500" stroke="#ddd" fill="none" /></svg></div></div>
      <div className={pbtn + "top-[38px] left-[575px]"}><svg width="18" height="10"><path d="M5 0L0 5l5 5V6.500L3.500 5 5 3.500zM13 0l5 5-5 5V6.500L14.500 5 13 3.500z" fill="#111" /><path d="M4 5h11" stroke="#111" strokeWidth="2" strokeDasharray="2 1" /></svg></div>
      <svg width="17" height="14" className="absolute top-[54px] left-[606px]" fill="none" stroke="#333"><path d="M1 4h3l4-3v12L4 10H1z" fill="#aaa" /><path d="M10 4q2 3 0 6M12 2q4 5 0 10M14.500 1q4 6 0 12" stroke="#456a94" /></svg>
      <svg width="80" height="20" viewBox="0 0 80 20" className="absolute top-[46px] left-[625px]">
        <defs><linearGradient id="vol"><stop offset="0" stopColor="#177a20" /><stop offset=".44" stopColor="#168427" /><stop offset=".54" stopColor="#a67312" /><stop offset=".75" stopColor="#9d4a14" /><stop offset="1" stopColor="#9a2114" /></linearGradient></defs>
        <path d="M0 20L79 .5V20z" fill="url(#vol)" stroke="#333" />
      </svg>
      <Fit w={25} className="absolute top-[47px] left-[631px] font-[DejaVu_Sans,sans-serif] text-[9.5px] leading-none text-[#444]">200%</Fit>
      <Fit w={61} className="absolute top-[45px] left-[720px] font-[DejaVu_Sans,sans-serif] text-[10.5px] leading-none text-[#111]">00:32/01:33</Fit>
    </div>
  );
}

/* ---------- screen recorder widget ---------- */

const Gear = () => (
  <svg width="22" height="22" viewBox="0 0 24 24" fill="#fff"><path fillRule="evenodd" d="M19.4 13a7.700 7.700 0 000-2l2.100-1.700a.5.5 0 00.1-.6l-2-3.500a.5.5 0 00-.6-.2l-2.500 1a7.300 7.300 0 00-1.700-1l-.4-2.600a.5.5 0 00-.5-.4h-4a.5.5 0 00-.5.4L9 5a7.700 7.700 0 00-1.700 1l-2.500-1a.5.5 0 00-.6.2l-2 3.500a.5.5 0 00.1.6L4.500 11a7.900 7.900 0 000 2l-2.100 1.700a.5.5 0 00-.1.6l2 3.500c.1.2.4.3.6.2l2.500-1a7.300 7.300 0 001.700 1l.4 2.600c0 .2.2.4.5.4h4c.3 0 .5-.2.5-.4L15 19a7.700 7.700 0 001.700-1l2.500 1c.2.1.5 0 .6-.2l2-3.500a.5.5 0 00-.1-.6zM12 15.500a3.500 3.500 0 110-7 3.500 3.500 0 010 7z" /></svg>
);
const Shots = () => <svg width="20" height="18"><path d="M.5.500h15v13H.5z" fill="#fff" stroke="#999" /><path d="M4 4h15v13H4z" fill="#fff" stroke="#333" strokeWidth=".7" /></svg>;

function Recorder() {
  return (
    <>
      <div className="absolute top-[330px] left-[1265px] flex h-[225px] w-[26px] flex-col items-center rounded-[4px] bg-[#171717]">
        <svg width="8" height="130" viewBox="0 0 8 130" className="self-start">
          <path d="M4 7l3-2M4 12h3M5 7v4" stroke="#ddd" /><path d="M3.500 22.500h4v12h-4z" fill="#fff" /><path d="M7 49q-5 6 0 12" stroke="#c92a20" fill="none" strokeWidth="1.500" />
          <ellipse cx="5" cy="72" rx="1.800" ry="2.700" fill="none" stroke="#ddd" /><path d="M5 91l2 6v-6z" fill="#fff" /><path d="M3.500 117h4v6h-4z" fill="#fff" />
        </svg>
        <svg width="20" height="22" viewBox="0 0 20 22" fill="none" className="mt-[7px] shrink-0">
          <circle cx="9" cy="9" r="7.500" stroke="#eee" strokeWidth="1.700" /><circle cx="9" cy="9" r="3.800" stroke="#fff" strokeWidth="1.800" /><path d="M5 16l-2 3h12" stroke="#fff" strokeWidth="2" /><circle cx="14.500" cy="16" r="3" fill="#e65948" />
        </svg>
        <div className="mt-[3px] w-[23px] border-t border-dotted border-white" />
        <div className="mt-[9px]"><Shots /></div>
        <div className="mt-[7px]"><Gear /></div>
      </div>
      <div className="absolute top-[331px] left-[1273px] flex h-[130px] w-[25px] flex-col items-center rounded-[3px] bg-[#1b1b1b] pr-px">
        <svg width="23" height="16" viewBox="0 0 23 16" fill="none" stroke="#fff" className="shrink-0"><path d="M4 11c-1-5 4-7 6-6 1 4-2 8-6 6zM3 12l5-5" strokeWidth="1.300" /><path d="M13 8h2M16.500 8h2M20 8h2" strokeWidth="2" /></svg>
        <div className="flex h-[23px] w-[23px] shrink-0 items-center justify-center bg-[#3c3c3c]">
          <svg width="19" height="16"><path d="M0 3h5l1-3h7l1 3h5v13H0z" fill="#fff" /><circle cx="9.500" cy="9" r="4" fill="none" stroke="#222" /></svg>
        </div>
        <svg width="20" height="14" className="mt-[9px] shrink-0"><path d="M0 0h14v14H0zM14 7l6-6v12z" fill="#fff" /></svg>
        <div className="mt-[11px] h-[18px]"><Shots /></div>
        <div className="mt-[7px]"><Gear /></div>
      </div>
    </>
  );
}

export default function App() {
  return (
    <div className="relative flex h-[766px] w-[1366px] flex-col overflow-hidden bg-white font-[Noto_Sans,sans-serif]">
      <TitleBar />
      <MenuBar />
      <Toolbar />
      <div className="flex h-[592px] shrink-0 overflow-hidden">
        <Sidebar />
        <Dashboard />
      </div>
      <SheetTabs />
      <StatusBar />
      <Taskbar />
      <PlayerOverlay />
      <Recorder />
    </div>
  );
}
